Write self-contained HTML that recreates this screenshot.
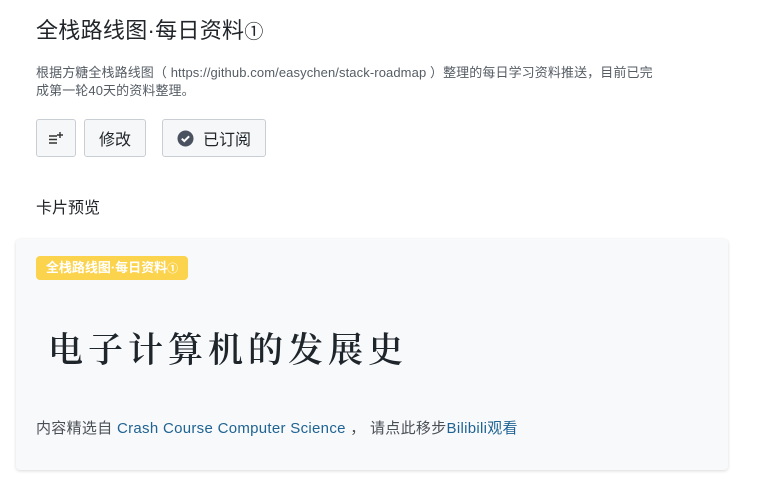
<!DOCTYPE html>
<html><head><meta charset="utf-8"><style>
body{margin:0;background:#fff;font-family:"Liberation Sans","Noto Sans CJK SC",sans-serif;color:#212529;width:760px;height:499px;overflow:hidden;position:relative}
.a{position:absolute;white-space:nowrap}
.btn{position:absolute;top:119px;height:38px;border:1px solid #c9ced4;border-radius:3px;background:#f6f7f8;box-sizing:border-box;display:flex;align-items:center;justify-content:center;font-size:16px;color:#212529}
.card{position:absolute;left:16px;top:239px;width:712px;height:231px;background:#f8f9fb;border-radius:4px;box-shadow:0 1px 3px rgba(0,0,0,.15)}
</style></head><body>
<div class="a" style="left:36px;top:13px;font-size:22px;letter-spacing:0.3px">全栈路线图·每日资料<span style="font-size:19px">①</span></div>
<div class="a" style="left:36px;top:64px;font-size:13px;color:#555c64;line-height:18px;letter-spacing:0.1px">根据方糖全栈路线图（ https://github.com/easychen/stack-roadmap ）整理的每日学习资料推送，目前已完<br>成第一轮40天的资料整理。</div>
<div class="btn" style="left:36px;width:40px;"><svg width="16" height="14" viewBox="0 0 16 14"><path d="M1 5h8M1 8.5h8M1 12h8" stroke="#333" stroke-width="1.5"/><path d="M12 1v6M9 4h6" stroke="#333" stroke-width="1.4"/></svg></div>
<div class="btn" style="left:84px;width:62px;">修改</div>
<div class="btn" style="left:162px;width:104px;"><svg width="17" height="17" viewBox="0 0 17 17" style="margin-right:9px"><circle cx="8.5" cy="8.5" r="8" fill="#4a5260"/><path d="M4.8 8.7l2.5 2.4 4.8-4.8" stroke="#fff" stroke-width="2" fill="none"/></svg>已订阅</div>
<div class="a" style="left:36px;top:194px;font-size:16px;">卡片预览</div>
<div class="card">
<div class="a" style="left:20px;top:17px;height:24px;width:152px;background:#fcd34d;border-radius:4px;color:#fff;font-size:13px;font-weight:bold;line-height:24px;text-align:center">全栈路线图·每日资料<span style="font-size:11px">①</span></div>
<div class="a" style="left:32px;top:84px;font-size:35px;letter-spacing:5px;font-family:'Noto Serif CJK SC',serif;font-weight:600;color:#1e252b">电子计算机的发展史</div>
<div class="a" style="left:20px;top:178px;font-size:15px;color:#4a4f55;letter-spacing:0.3px">内容精选自 <span style="color:#1f6392">Crash Course Computer Science</span> ， 请点此移步<span style="color:#1f6392">Bilibili观看</span></div>
</div>
</body></html>
